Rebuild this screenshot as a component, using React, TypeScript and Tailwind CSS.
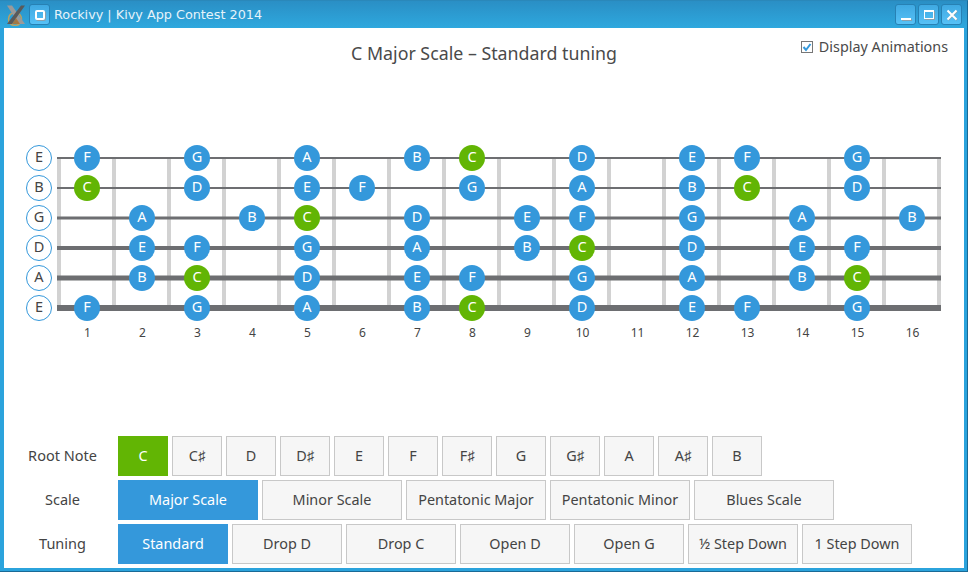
const strings = [
  { open: 'E', weight: 'h-[2px]', notes: { 1: 'F', 3: 'G', 5: 'A', 7: 'B', 8: 'C', 10: 'D', 12: 'E', 13: 'F', 15: 'G' } },
  { open: 'B', weight: 'h-[2px]', notes: { 1: 'C', 3: 'D', 5: 'E', 6: 'F', 8: 'G', 10: 'A', 12: 'B', 13: 'C', 15: 'D' } },
  { open: 'G', weight: 'h-[3px]', notes: { 2: 'A', 4: 'B', 5: 'C', 7: 'D', 9: 'E', 10: 'F', 12: 'G', 14: 'A', 16: 'B' } },
  { open: 'D', weight: 'h-[4px]', notes: { 2: 'E', 3: 'F', 5: 'G', 7: 'A', 9: 'B', 10: 'C', 12: 'D', 14: 'E', 15: 'F' } },
  { open: 'A', weight: 'h-[5px]', notes: { 2: 'B', 3: 'C', 5: 'D', 7: 'E', 8: 'F', 10: 'G', 12: 'A', 14: 'B', 15: 'C' } },
  { open: 'E', weight: 'h-[6px]', notes: { 1: 'F', 3: 'G', 5: 'A', 7: 'B', 8: 'C', 10: 'D', 12: 'E', 13: 'F', 15: 'G' } },
] as { open: string; weight: string; notes: Record<number, string> }[]

const frets = Array.from({ length: 16 }, (_, i) => i + 1)
const fretLines = Array.from({ length: 17 }, (_, i) => i)

const controls = [
  { label: 'Root Note', width: 'w-[50px]', active: 'C', activeClass: 'bg-[#62b504]', items: ['C', 'C♯', 'D', 'D♯', 'E', 'F', 'F♯', 'G', 'G♯', 'A', 'A♯', 'B'] },
  { label: 'Scale', width: 'w-[140px]', active: 'Major Scale', activeClass: 'bg-[#3498db]', items: ['Major Scale', 'Minor Scale', 'Pentatonic Major', 'Pentatonic Minor', 'Blues Scale'] },
  { label: 'Tuning', width: 'w-[110px]', active: 'Standard', activeClass: 'bg-[#3498db]', items: ['Standard', 'Drop D', 'Drop C', 'Open D', 'Open G', '½ Step Down', '1 Step Down'] },
]

function XLogo() {
  return (
    <svg width="20" height="21" viewBox="0 0 20 21" fill="none">
      <circle cx="9" cy="14" r="6.5" stroke="#e8a23a" strokeWidth="1.5" opacity="0.75" />
      <path d="M1 0.5 L6 0.5 L19 19 L13 19 Z" fill="#9a9a9a" />
      <path d="M19 0.5 L15 0.5 L1 19 L6 19 Z" fill="#5a5a5a" />
      <path d="M6 19 L10 13 L14 19 Z" fill="#b5702c" opacity="0.85" />
    </svg>
  )
}

function WinButton({ children }: { children: React.ReactNode }) {
  return (
    <div className="w-[21px] h-[21px] rounded-[3px] border border-[#2781b4] bg-gradient-to-b from-[#3fa9e2] to-[#56c1f6] flex items-center justify-center">
      {children}
    </div>
  )
}

export default function App() {
  return (
    <div className="w-[968px] h-[572px] flex flex-col overflow-hidden bg-[#2ba3dc] border-t border-[#2a88ba] border-r border-b border-r-[#1a6a96] border-b-[#1a6a96]">
      <div className="h-[27px] flex items-center bg-gradient-to-b from-[#2a8fc5] to-[#2ea8de]">
        <div className="ml-[6px] mt-[1px]">
          <XLogo />
        </div>
        <div className="ml-[3px] w-[21px] h-[21px] rounded-[3px] border border-[#2781b4] bg-gradient-to-b from-[#3fa9e2] to-[#56c1f6] flex items-center justify-center">
          <div className="w-[10px] h-[10px] border-[2px] border-white rounded-[2px] shadow-[1px_1px_0_#8aa0ad]" />
        </div>
        <span className="ml-[4px] text-[12.8px] text-[#e6f3fa] font-['DejaVu_Sans',sans-serif]">
          Rockivy | Kivy App Contest 2014
        </span>
        <div className="ml-auto mr-[5px] flex gap-[2px]">
          <WinButton>
            <div className="w-[10px] h-[2px] bg-white mt-[9px] shadow-[1px_1px_0_#8aa0ad]" />
          </WinButton>
          <WinButton>
            <div className="w-[10px] h-[9px] border border-white border-t-2 shadow-[1px_1px_0_#8aa0ad]" />
          </WinButton>
          <WinButton>
            <svg width="12" height="12" viewBox="0 0 12 12">
              <path d="M2 2 L11 11 M11 2 L2 11" stroke="#8aa0ad" strokeWidth="2" />
              <path d="M1.5 1.5 L10.5 10.5 M10.5 1.5 L1.5 10.5" stroke="white" strokeWidth="2" />
            </svg>
          </WinButton>
        </div>
      </div>

      <div className="flex-1 mx-[3px] ml-[4px] mb-[3px] bg-white flex flex-col text-[#444444] font-['Noto_Sans',sans-serif]">
        <div className="h-[115px] relative">
          <h1 className="pt-[12px] text-center text-[17.8px] leading-[26px] text-[#4a4a4a]">
            C Major Scale – Standard tuning
          </h1>
          <label className="absolute top-[9px] right-[16px] flex items-center gap-[6px] text-[14.35px] leading-[20px] text-[#4a4a4a]">
            <span className="w-[12px] h-[12px] border border-[#777777] bg-white flex items-center justify-center">
              <svg width="10" height="10" viewBox="0 0 10 10">
                <path d="M1.5 5 L4 8 L8.5 2" stroke="#3498db" strokeWidth="2" fill="none" />
              </svg>
            </span>
            Display Animations
          </label>
        </div>

        <div className="flex ml-[22px]">
          <div className="w-[31px] flex flex-col">
            {strings.map((s, i) => (
              <div key={i} className="h-[30px] flex items-center">
                <div className="w-[26px] h-[26px] rounded-full border border-[#3498db] bg-white flex items-center justify-center pb-[2px] text-[14.5px] text-[#444444]">
                  {s.open}
                </div>
              </div>
            ))}
          </div>
          <div className="relative w-[884px] flex flex-col">
            <div className="absolute top-[15px] left-0 right-0 h-[152px] flex justify-between">
              {fretLines.map((f) => (
                <div key={f} className="w-[4px] bg-[#d2d2d2]" />
              ))}
            </div>
            {strings.map((s, i) => (
              <div key={i} className="relative h-[30px] flex pl-[3px] items-center">
                <div className={`absolute left-0 right-0 top-1/2 -translate-y-1/2 bg-[#6d6e71] ${s.weight}`} />
                {frets.map((f) => (
                  <div key={f} className="relative w-[55px] pl-[14px]">
                    {s.notes[f] && (
                      <div
                        className={`w-[26px] h-[26px] rounded-full flex items-center justify-center pb-[2px] text-[14.5px] text-white ${
                          s.notes[f] === 'C' ? 'bg-[#62b504]' : 'bg-[#3498db]'
                        }`}
                      >
                        {s.notes[f]}
                      </div>
                    )}
                  </div>
                ))}
              </div>
            ))}
            <div className="flex pl-[3px]">
              {frets.map((f) => (
                <div key={f} className="w-[55px] text-center text-[12px] leading-[20px] text-[#444444]">
                  {f}
                </div>
              ))}
            </div>
          </div>
        </div>

        <div className="mt-auto mb-[4px] flex flex-col gap-[4px]">
          {controls.map((c) => (
            <div key={c.label} className="flex items-center">
              <div className="w-[114px] pb-[1px] pl-[3px] text-center text-[14.5px] text-[#444444]">{c.label}</div>
              <div className="flex gap-[4px]">
                {c.items.map((item) => (
                  <div
                    key={item}
                    className={`${c.width} h-[40px] flex items-center justify-center pb-[1px] text-[14.4px] ${
                      item === c.active
                        ? `${c.activeClass} text-white`
                        : 'bg-[#f6f6f6] border border-[#c8c8c8] text-[#444444]'
                    }`}
                  >
                    {item}
                  </div>
                ))}
              </div>
            </div>
          ))}
        </div>
      </div>
    </div>
  )
}
